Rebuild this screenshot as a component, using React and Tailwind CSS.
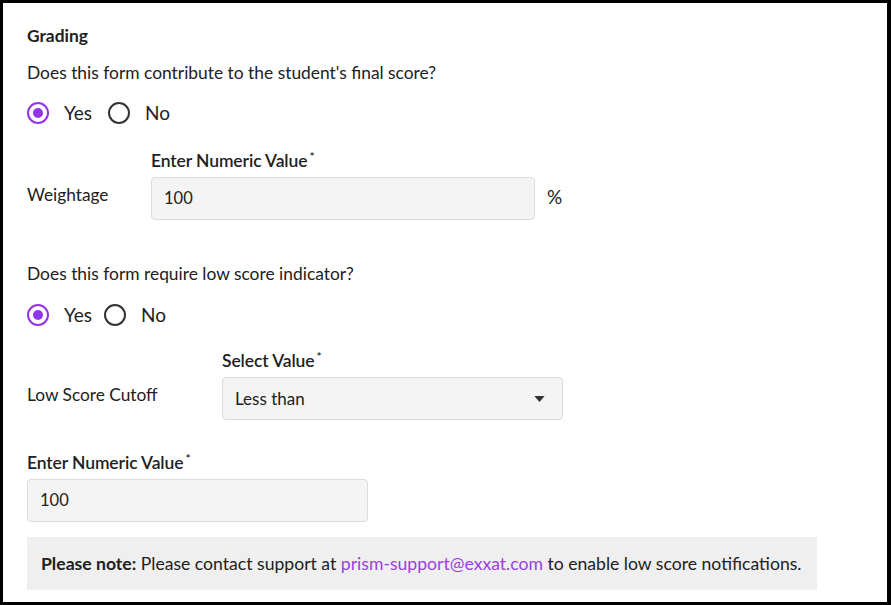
function Radio({ checked, label, className = '' }) {
  return (
    <label className={`flex items-center ${className}`}>
      <span
        className={`flex h-[22px] w-[22px] items-center justify-center rounded-full border-2 ${
          checked ? 'border-[#9333ea]' : 'border-[#333]'
        }`}
      >
        {checked && <span className="h-[10px] w-[10px] rounded-full bg-[#9333ea]" />}
      </span>
      <span className="ml-[15px] text-[19px] leading-[22px]">{label}</span>
    </label>
  )
}

function FieldLabel({ children }) {
  return (
    <div className="mb-[6px] text-[17.5px] font-semibold leading-[20px] tracking-[-0.1px] text-[#212121]">
      {children}
      <sup className="ml-[2px] text-[12px]">*</sup>
    </div>
  )
}

export default function App() {
  return (
    <div
      className="h-[605px] w-[891px] border-t-[3px] border-l-[3px] border-r-[4px] border-b-[3px] border-black bg-white text-[#212121]"
      style={{ fontFamily: 'Lato, "Noto Sans", sans-serif' }}
    >
      <div className="pl-[24px] pt-[23px]">
        <h3 className="text-[17.4px] font-bold leading-[20px]">Grading</h3>

        <p className="mt-[17px] text-[17.4px] leading-[20px]">
          Does this form contribute to the student's final score?
        </p>
        <div className="mt-[19px] flex items-center">
          <Radio checked label="Yes" />
          <Radio label="No" className="ml-[16px]" />
        </div>

        <div className="mt-[27px] flex items-end">
          <div className="mb-[12px] w-[124px] text-[17.3px]">Weightage</div>
          <div>
            <FieldLabel>Enter Numeric Value</FieldLabel>
            <div className="flex items-start">
              <div className="flex h-[43px] w-[384px] items-center rounded-[4px] border border-[#dcdcdc] bg-[#f4f4f4] px-[12px] text-[16.5px]">
                100
              </div>
              <span className="ml-[12px] mt-[6px] text-[19px]">%</span>
            </div>
          </div>
        </div>

        <p className="mt-[44px] text-[17.4px] leading-[20px]">
          Does this form require low score indicator?
        </p>
        <div className="mt-[20px] flex items-center">
          <Radio checked label="Yes" />
          <Radio label="No" className="ml-[12px]" />
        </div>

        <div className="mt-[25px] flex items-end">
          <div className="mb-[12px] w-[195px] text-[17.3px]">Low Score Cutoff</div>
          <div>
            <FieldLabel>Select Value</FieldLabel>
            <div className="flex h-[43px] w-[341px] items-center justify-between rounded-[4px] border border-[#dcdcdc] bg-[#f4f4f4] px-[12px] text-[17px]">
              <span>Less than</span>
              <svg width="11" height="6" viewBox="0 0 12 7" className="mr-[5px]">
                <path d="M0 0 L12 0 L6 7 Z" fill="#333" />
              </svg>
            </div>
          </div>
        </div>

        <div className="mt-[33px]">
          <FieldLabel>Enter Numeric Value</FieldLabel>
          <div className="flex h-[43px] w-[341px] items-center rounded-[4px] border border-[#dcdcdc] bg-[#f4f4f4] px-[12px] text-[16.5px]">
            100
          </div>
        </div>

        <div className="mt-[15px] h-[53px] w-[790px] whitespace-nowrap bg-[#efefef] px-[14px] text-[17.6px] leading-[53px]">
          <span className="font-bold">Please note:</span> Please contact support at{' '}
          <span className="text-[#9b3fe0]">prism-support@exxat.com</span> to enable low score
          notifications.
        </div>
      </div>
    </div>
  )
}
